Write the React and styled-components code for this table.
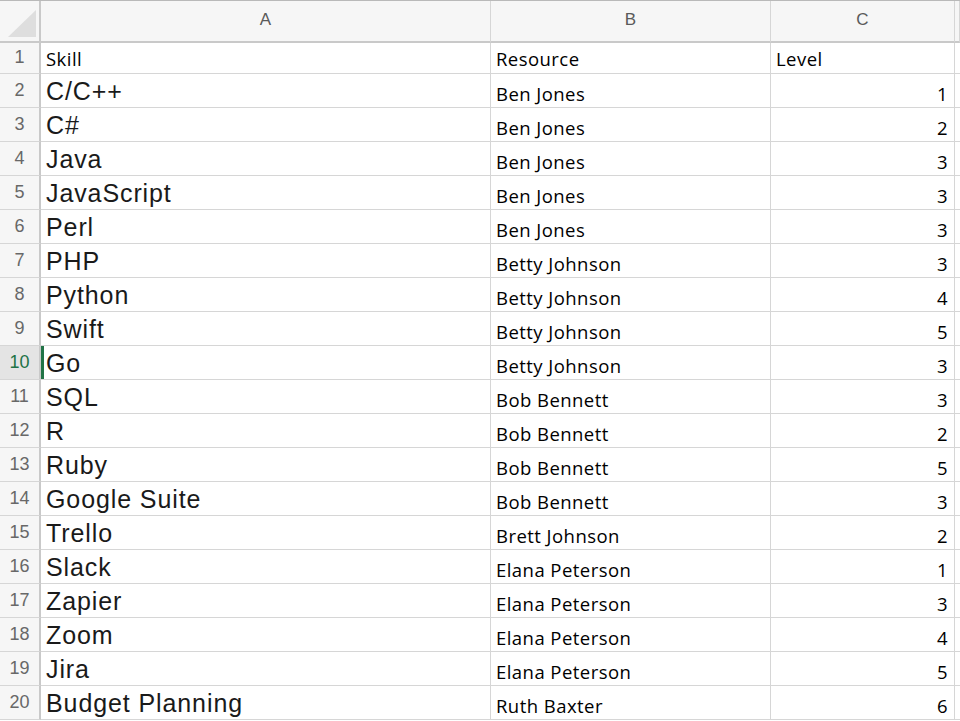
import React from "react";
import styled, { createGlobalStyle } from "styled-components";

const Global = createGlobalStyle`
  html, body {
    margin: 0;
    padding: 0;
    background: #ffffff;
    overflow: hidden;
  }
`;

const rows = [
  ["Skill", "Resource", "Level"],
  ["C/C++", "Ben Jones", 1],
  ["C#", "Ben Jones", 2],
  ["Java", "Ben Jones", 3],
  ["JavaScript", "Ben Jones", 3],
  ["Perl", "Ben Jones", 3],
  ["PHP", "Betty Johnson", 3],
  ["Python", "Betty Johnson", 4],
  ["Swift", "Betty Johnson", 5],
  ["Go", "Betty Johnson", 3],
  ["SQL", "Bob Bennett", 3],
  ["R", "Bob Bennett", 2],
  ["Ruby", "Bob Bennett", 5],
  ["Google Suite", "Bob Bennett", 3],
  ["Trello", "Brett Johnson", 2],
  ["Slack", "Elana Peterson", 1],
  ["Zapier", "Elana Peterson", 3],
  ["Zoom", "Elana Peterson", 4],
  ["Jira", "Elana Peterson", 5],
  ["Budget Planning", "Ruth Baxter", 6],
];

const Sheet = styled.div`
  display: grid;
  grid-template-columns: 41px 450px 280px 184px 1fr;
  grid-template-rows: 42px 31px repeat(19, 34px);
  width: 960px;
  border-top: 1px solid #b9b9b9;
`;

const ColHead = styled.div`
  display: flex;
  align-items: center;
  justify-content: center;
  background: #f6f6f6;
  border-right: 1px solid #d6d6d6;
  border-bottom: 2px solid #c9c9c9;
  font-family: "Liberation Sans", Arial, sans-serif;
  font-size: 17px;
  color: #5a5a5a;
  padding-bottom: 2px;
`;

const Corner = styled.div`
  position: relative;
  background: #f6f6f6;
  border-right: 2px solid #c9c9c9;
  border-bottom: 2px solid #c9c9c9;
`;

const Triangle = styled.svg`
  position: absolute;
  left: 8px;
  top: 9px;
`;

const RowHead = styled.div`
  display: flex;
  align-items: flex-end;
  justify-content: center;
  padding-bottom: ${(p) => (p.$first ? "5px" : "6px")};
  background: ${(p) => (p.$active ? "#e4e4e4" : "#f6f6f6")};
  border-right: 2px solid #c9c9c9;
  border-bottom: 1px solid #d6d6d6;
  font-family: "Liberation Sans", Arial, sans-serif;
  font-size: 18px;
  color: ${(p) => (p.$active ? "#217346" : "#686868")};
`;

const Cell = styled.div`
  display: flex;
  align-items: flex-end;
  justify-content: ${(p) => (p.$num ? "flex-end" : "flex-start")};
  padding: 0 6px 3px 5px;
  border-right: 1px solid #d6d6d6;
  border-bottom: 1px solid #d6d6d6;
  box-shadow: ${(p) => (p.$selected ? "inset 3px 0 0 #217346" : "none")};
  white-space: nowrap;
  overflow: hidden;
  color: #000;
`;

const SkillText = styled.span`
  font-family: "Liberation Sans", Arial, sans-serif;
  font-size: 25px;
  letter-spacing: 0.9px;
  line-height: 1;
  padding-bottom: 0;
  color: #1a1a1a;
`;

const CalText = styled.span`
  font-family: "Open Sans", sans-serif;
  font-size: 18.5px;
  letter-spacing: 0.45px;
  line-height: 1;
  padding-bottom: ${(p) => (p.$head ? "2px" : "1px")};
`;

const Edge = styled.div`
  border-bottom: 1px solid #d6d6d6;
`;

export default function App() {
  return (
    <>
      <Global />
      <Sheet>
        <Corner>
          <Triangle width="28" height="27" viewBox="0 0 28 27">
            <polygon points="0,27 28,27 28,0" fill="#dedede" />
          </Triangle>
        </Corner>
        <ColHead>A</ColHead>
        <ColHead>B</ColHead>
        <ColHead>C</ColHead>
        <ColHead />
        {rows.map((r, i) => (
          <React.Fragment key={i}>
            <RowHead $first={i === 0} $active={i === 9}>
              {i + 1}
            </RowHead>
            <Cell $selected={i === 9}>
              {i === 0 ? <CalText $head>{r[0]}</CalText> : <SkillText>{r[0]}</SkillText>}
            </Cell>
            <Cell>
              <CalText $head={i === 0}>{r[1]}</CalText>
            </Cell>
            <Cell $num={i > 0}>
              <CalText $head={i === 0}>{r[2]}</CalText>
            </Cell>
            <Edge />
          </React.Fragment>
        ))}
      </Sheet>
    </>
  );
}
